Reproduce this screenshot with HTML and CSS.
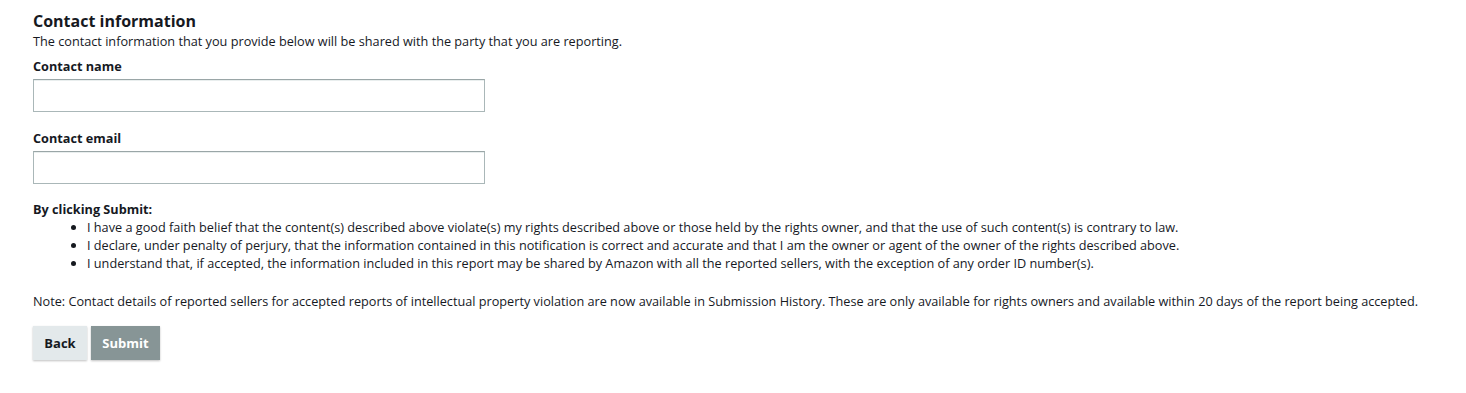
FILE: index.html
```html
<!DOCTYPE html>
<html lang="en">
<head>
  <meta charset="UTF-8">
  <title>Contact information</title>
  <link rel="stylesheet" href="styles.css">
</head>
<body>
  <div class="form">
    <h2 class="title">Contact information</h2>
    <p class="intro">The contact information that you provide below will be shared with the party that you are reporting.</p>

    <div class="field">
      <label for="contactName">Contact name</label>
      <input type="text" id="contactName">
    </div>

    <div class="field">
      <label for="contactEmail">Contact email</label>
      <input type="text" id="contactEmail">
    </div>

    <div class="terms">
      <div class="terms-title">By clicking Submit:</div>
      <ul>
        <li>I have a good faith belief that the content(s) described above violate(s) my rights described above or those held by the rights owner, and that the use of such content(s) is contrary to law.</li>
        <li>I declare, under penalty of perjury, that the information contained in this notification is correct and accurate and that I am the owner or agent of the owner of the rights described above.</li>
        <li>I understand that, if accepted, the information included in this report may be shared by Amazon with all the reported sellers, with the exception of any order ID number(s).</li>
      </ul>
    </div>

    <p class="note">Note: Contact details of reported sellers for accepted reports of intellectual property violation are now available in Submission History. These are only available for rights owners and available within 20 days of the report being accepted.</p>

    <div class="buttons">
      <button class="btn btn-back">Back</button>
      <button class="btn btn-submit">Submit</button>
    </div>
  </div>
</body>
</html>
```

FILE: styles.css
```css
body {
  margin: 0;
  background-color: #fff;
  font-family: "Open Sans", Arial, sans-serif;
  font-size: 12.7px;
  color: #16191f;
}

.form {
  padding: 10px 10px 10px 33px;
}

.title {
  margin: 0;
  font-size: 16px;
  font-weight: bold;
  line-height: 22px;
}

.intro {
  margin: 0;
  line-height: 18px;
}

.field {
  margin-top: 7px;
}

.field + .field {
  margin-top: 17px;
}

.field label {
  display: block;
  font-weight: bold;
  line-height: 18px;
  margin-bottom: 4px;
}

.field input {
  display: block;
  width: 452px;
  height: 33px;
  margin: 0;
  box-sizing: border-box;
  border: 1px solid #aab7b8;
  border-top-color: #9aa6a7;
  box-shadow: inset 0 1px 0 #e9eeee;
}

.terms {
  margin-top: 16px;
}

.terms-title {
  font-weight: bold;
  line-height: 18px;
}

.terms ul {
  margin: 0;
  padding-left: 54px;
}

.terms li {
  line-height: 18px;
}

.note {
  margin: 20px 0 16px;
  line-height: 18px;
}

.buttons {
  display: flex;
  gap: 4px;
}

.btn {
  height: 34px;
  border: none;
  font-family: inherit;
  font-size: 13px;
  font-weight: bold;
  box-shadow: 0 1px 2px rgba(0, 0, 0, 0.25);
  cursor: pointer;
}

.btn-back {
  width: 54px;
  background-color: #e3e9eb;
  color: #16191f;
}

.btn-submit {
  width: 69px;
  background-color: #879596;
  color: #fff;
}
```
